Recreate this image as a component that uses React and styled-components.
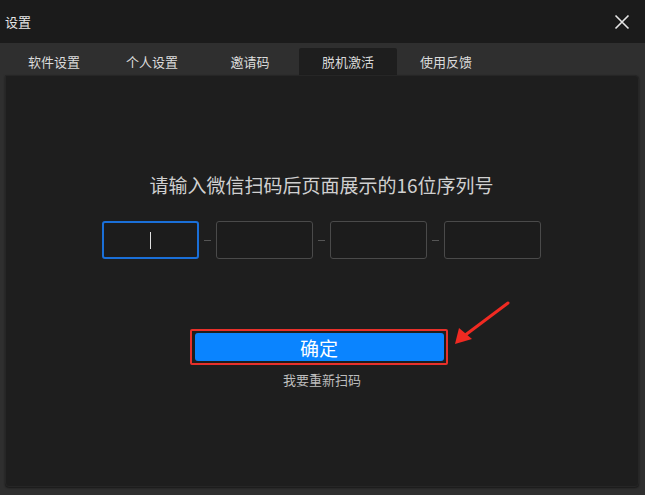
import React from 'react';
import styled, { createGlobalStyle } from 'styled-components';

const Global = createGlobalStyle`
  html, body { margin: 0; padding: 0; background: #2f2f2f; }
  body { font-family: "Noto Sans CJK SC", "Noto Sans", sans-serif; }
`;

const Window = styled.div`
  width: 645px;
  height: 495px;
  display: flex;
  flex-direction: column;
  background: #2f2f2f;
  overflow: hidden;
`;

const TitleBar = styled.div`
  height: 43px;
  flex: none;
  background: #1b1b1b;
  display: flex;
  align-items: center;
  justify-content: space-between;
  padding: 0 14px 0 5px;
  color: #e6e6e6;
  font-size: 13px;
`;

const Close = styled.button`
  border: 0;
  background: none;
  padding: 0;
  width: 18px;
  height: 18px;
  color: #e0e0e0;
  display: flex;
  align-items: center;
  justify-content: center;
`;

const Tabs = styled.div`
  display: flex;
  padding: 5px 5px 0;
  height: 27px;
  flex: none;
`;

const Tab = styled.div`
  width: 98px;
  display: flex;
  align-items: center;
  justify-content: center;
  font-size: 13px;
  color: ${p => (p.$active ? '#d8d8d8' : '#dcdcdc')};
  background: ${p => (p.$active ? '#1e1e1e' : 'transparent')};
  border-radius: 2px 2px 0 0;
`;

const Panel = styled.div`
  position: relative;
  margin: 0 6px 8px 5px;
  flex: 1;
  background: #1e1e1e;
  border: 1px solid #262626;
  border-radius: 0 4px 4px 4px;
  box-shadow: 0 1px 2px rgba(0,0,0,0.5);
  display: flex;
  flex-direction: column;
  align-items: center;
`;

const Prompt = styled.div`
  margin-top: 97px;
  font-size: 19px;
  line-height: 24px;
  color: #d0d0d0;
  font-family: "Noto Sans CJK SC", sans-serif;
  margin-left: -1px;
`;

const CodeRow = styled.div`
  margin-top: 24px;
  display: flex;
  align-items: center;
  margin-left: -1px;
`;

const CodeBox = styled.div`
  width: 97px;
  height: 38px;
  box-sizing: border-box;
  border: ${p => (p.$focus ? '2px solid #1a6fd8' : '1px solid #4a4a4a')};
  border-radius: 3px;
  background: #1c1c1c;
  display: flex;
  align-items: center;
  justify-content: center;
`;

const Caret = styled.div`
  width: 1px;
  height: 17px;
  background: #e0e0e0;
`;

const Dash = styled.div`
  width: 17px;
  display: flex;
  justify-content: center;
  &::before {
    content: '';
    width: 7px;
    height: 1px;
    background: #555;
  }
`;

const Highlight = styled.div`
  margin-top: 70px;
  margin-left: -7px;
  padding: 2px 2px 2px 3px;
  border: 2px solid #e8302a;
  border-radius: 2px;
`;

const ConfirmButton = styled.button`
  width: 249px;
  height: 28px;
  border: 0;
  border-radius: 3px;
  background: #0a84ff;
  color: #ffffff;
  font-size: 19px;
  font-family: "Noto Sans CJK SC", sans-serif;
  display: flex;
  align-items: center;
  justify-content: center;
  padding: 0;
`;

const Rescan = styled.div`
  margin-top: 5px;
  font-size: 13px;
  line-height: 19px;
  color: #bdbdbd;
`;

const Arrow = styled.svg`
  position: absolute;
  left: 440px;
  top: 224px;
`;

const tabs = ['软件设置', '个人设置', '邀请码', '脱机激活', '使用反馈'];

export default function App() {
  return (
    <Window>
      <Global />
      <TitleBar>
        <span>设置</span>
        <Close>
          <svg width="16" height="16" viewBox="0 0 16 16">
            <path d="M1.5 1.5 L14.5 14.5 M14.5 1.5 L1.5 14.5" stroke="#e6e6e6" strokeWidth="1.6" />
          </svg>
        </Close>
      </TitleBar>
      <Tabs>
        {tabs.map(t => (
          <Tab key={t} $active={t === '脱机激活'}>{t}</Tab>
        ))}
      </Tabs>
      <Panel>
        <Prompt>请输入微信扫码后页面展示的16位序列号</Prompt>
        <CodeRow>
          <CodeBox $focus><Caret /></CodeBox>
          <Dash />
          <CodeBox />
          <Dash />
          <CodeBox />
          <Dash />
          <CodeBox />
        </CodeRow>
        <Highlight>
          <ConfirmButton>确定</ConfirmButton>
        </Highlight>
        <Rescan>我要重新扫码</Rescan>
        <Arrow width="70" height="50" viewBox="0 0 70 50">
          <path d="M62 3 L18 36" stroke="#f02a22" strokeWidth="3" strokeLinecap="round" />
          <path d="M9 44 L13 28 L26 39 Z" fill="#f02a22" />
        </Arrow>
      </Panel>
    </Window>
  );
}
